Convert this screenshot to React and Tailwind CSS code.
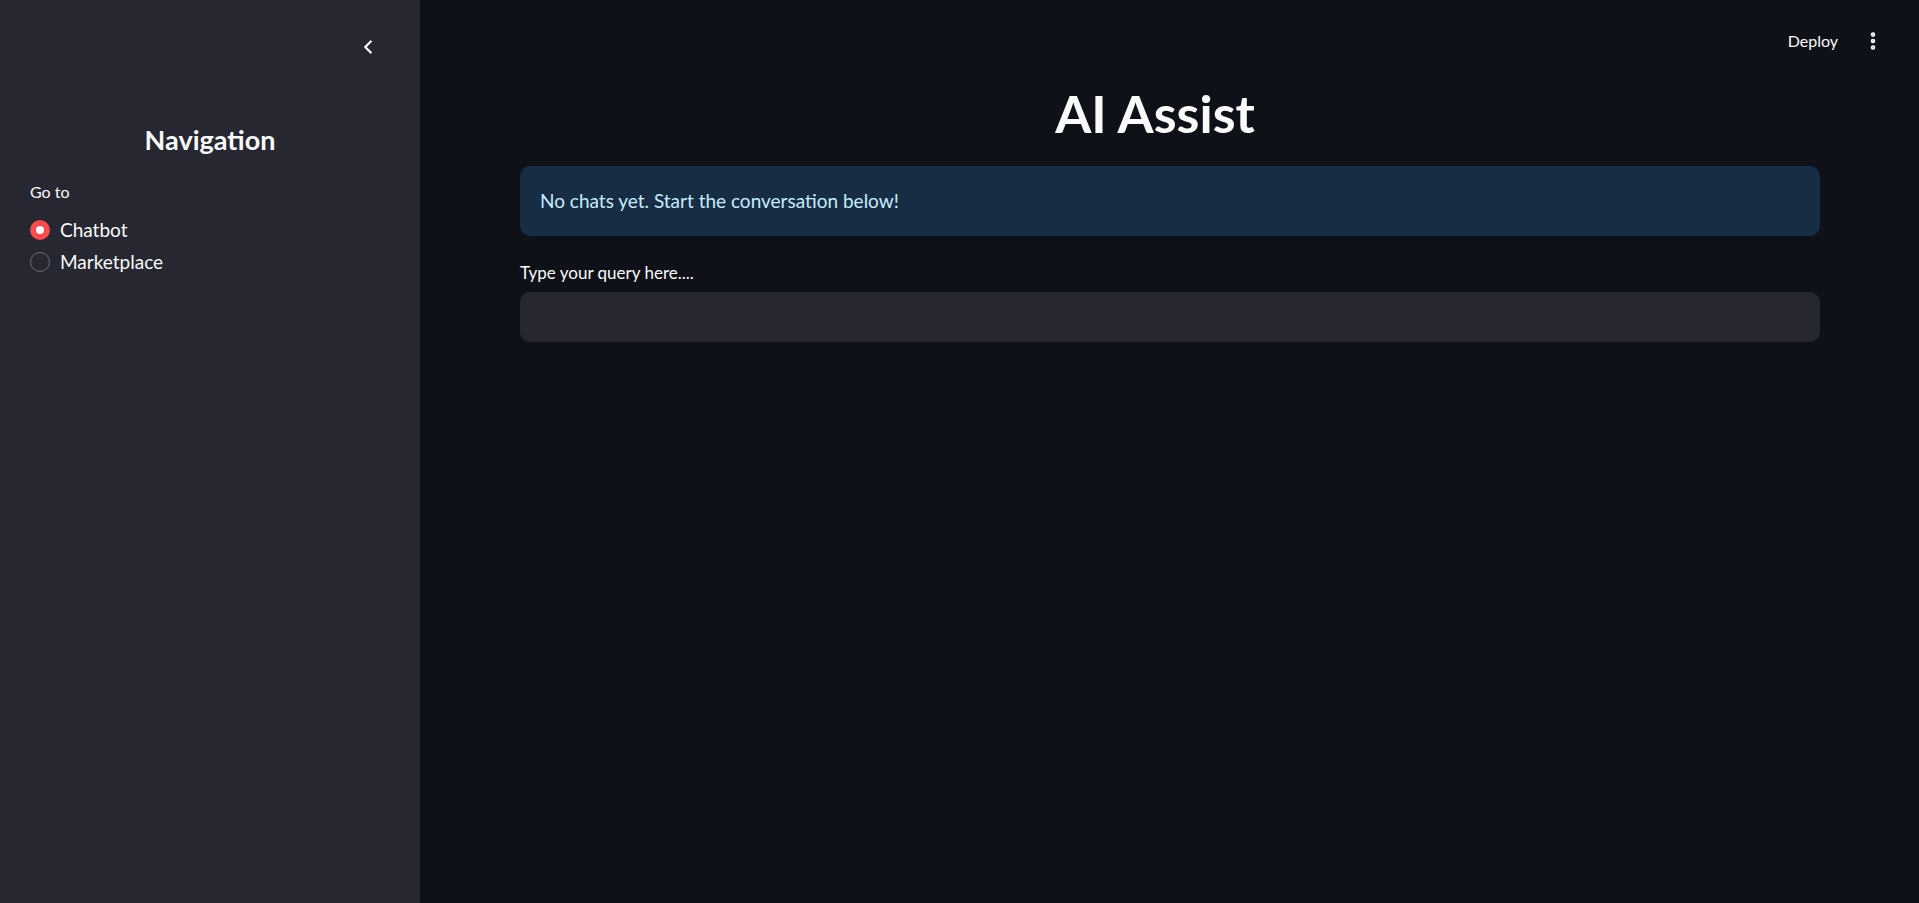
import { ChevronLeft, EllipsisVertical } from "lucide-react";

const font = { fontFamily: '"Lato", "Noto Sans", sans-serif' };

function Radio({ label, checked }) {
  return (
    <label className="flex items-center gap-[10px] h-[32px] cursor-pointer">
      {checked ? (
        <span className="w-[20px] h-[20px] rounded-full bg-[#ff4b4b] flex items-center justify-center">
          <span className="w-[8px] h-[8px] rounded-full bg-white" />
        </span>
      ) : (
        <span className="w-[20px] h-[20px] rounded-full border border-[#6a6c75]" />
      )}
      <span className="text-[19px] text-[#fafafa]">{label}</span>
    </label>
  );
}

export default function App() {
  return (
    <div className="flex h-screen w-full bg-[#0e1117] text-[#fafafa]" style={font}>
      <aside className="w-[420px] shrink-0 bg-[#262730] flex flex-col">
        <div className="flex justify-end pr-[41px] pt-[36px] h-[60px]">
          <ChevronLeft size={22} strokeWidth={2.5} className="text-white" />
        </div>
        <div className="px-[30px]">
          <h2 className="text-center text-[27px] font-bold mt-[66px] leading-none">Navigation</h2>
          <div className="text-[16px] mt-[27px]">Go to</div>
          <div className="mt-[10px] flex flex-col">
            <Radio label="Chatbot" checked />
            <Radio label="Marketplace" />
          </div>
        </div>
      </aside>

      <main className="flex-1 flex flex-col">
        <div className="flex justify-end items-center gap-[24px] pr-[35px] h-[82px]">
          <span className="text-[16px]">Deploy</span>
          <EllipsisVertical size={22} strokeWidth={3} />
        </div>
        <div className="pl-[100px] pr-[99px] flex flex-col">
          <h1 className="text-center text-[52px] font-bold leading-none pr-[30px] mt-[5px]">AI Assist</h1>
          <div className="mt-[27px] h-[70px] rounded-[10px] bg-[#172d43] flex items-center px-[20px]">
            <span className="text-[19px] text-[#c7ebff]">No chats yet. Start the conversation below!</span>
          </div>
          <div className="mt-[24px] text-[17px]">Type your query here....</div>
          <input className="mt-[6px] h-[50px] rounded-[10px] bg-[#262730] outline-none px-4 text-[18px]" />
        </div>
      </main>
    </div>
  );
}
